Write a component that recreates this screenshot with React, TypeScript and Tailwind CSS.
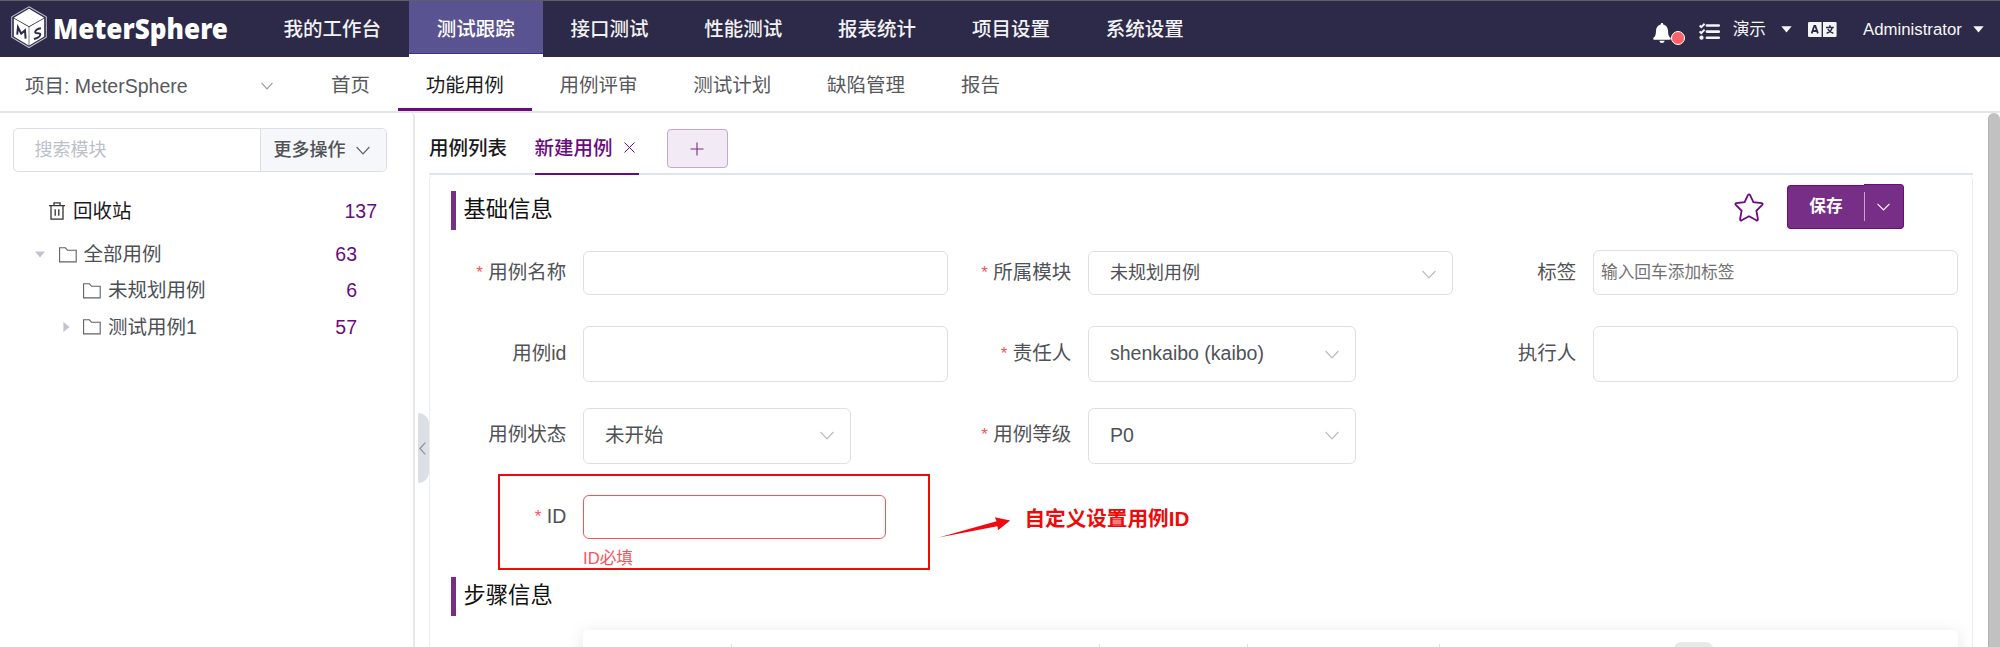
import type { ReactNode } from "react";

const SANS = "font-['Liberation_Sans','Noto_Sans_CJK_SC',sans-serif]";

function Chevron({ className, w = 14, h = 9 }: { className?: string; w?: number; h?: number }) {
  return (
    <svg width={w} height={h} viewBox="0 0 14 9" preserveAspectRatio="none" fill="none" className={className}>
      <path d="M0.6 1 L7 7.8 L13.4 1" stroke="currentColor" strokeWidth="1.2" />
    </svg>
  );
}

function Caret() {
  return (
    <svg width="11" height="7" viewBox="0 0 11 7" className="shrink-0">
      <path d="M0.3 0.3 H10.7 L5.5 6.6 Z" fill="#f4f4f6" />
    </svg>
  );
}

function Logo() {
  return (
    <svg width="252" height="57" viewBox="0 0 252 57" className="shrink-0 overflow-visible">
      <path d="M29 6.8 L46.3 16.8 V37.2 L29 47.5 L11.7 37.2 V16.8 Z" fill="none" stroke="#bdbccb" strokeWidth="1.1" />
      <path d="M29 8.8 L44.2 17.7 L29 26.2 L13.8 17.7 Z" fill="#fff" />
      <path d="M13.8 18.6 L28.7 27 V45.4 L13.8 36.6 Z" fill="#fff" />
      <path d="M44.2 18.6 L29.3 27 V45.4 L44.2 36.6 Z" fill="#fff" />
      <path d="M17.2 34.6 L18 27.2 L21.2 33.6 L25 30.4 L25.6 38.6" fill="none" stroke="#2c2a48" strokeWidth="2" />
      <path d="M40.9 28.2 C37.4 28.6 34.9 30.4 35.2 32.4 C35.5 34.2 40 32.2 40.3 34.2 C40.5 36.4 37.4 38.3 33.9 38.9" fill="none" stroke="#2c2a48" strokeWidth="2" />
      <text
        x="53"
        y="38.5"
        textLength="175"
        lengthAdjust="spacingAndGlyphs"
        className="fill-white font-['Noto_Sans',sans-serif] text-[28.5px] leading-none font-black"
      >
        MeterSphere
      </text>
    </svg>
  );
}

const mainNav = ["我的工作台", "测试跟踪", "接口测试", "性能测试", "报表统计", "项目设置", "系统设置"];
const subNav = ["首页", "功能用例", "用例评审", "测试计划", "缺陷管理", "报告"];

function Header() {
  return (
    <header className="flex h-[57px] shrink-0 border-t border-[#5f5f62] bg-[#2c2a48] text-white">
      <div className="-mt-px w-[255.5px] shrink-0">
        <Logo />
      </div>
      <nav className="flex">
        {mainNav.map((item) =>
          item === "测试跟踪" ? (
            <div key={item} className="h-14 bg-white">
              <div className="flex h-[53px] items-center border-b border-[#3a3191] bg-[#5a5391] px-[27.9px] pt-[5px] text-[19.5px] font-medium">
                {item}
              </div>
            </div>
          ) : (
            <div key={item} className="flex h-[53px] items-center px-[27.9px] pt-[5px] text-[19.5px] font-medium text-[#f2f2f4]">
              {item}
            </div>
          )
        )}
      </nav>
      <div className="ml-auto flex h-[57px] items-center pr-4 text-[16.7px] text-[#f6f6f8]">
        <div className="relative mt-[7px] h-[20px] w-[34px]">
          <svg width="18" height="20" viewBox="0 0 18 20">
            <path
              d="M9 0 C9.9 0 10.3 .7 10.2 1.5 C13.2 2.2 14.9 4.6 15 7.7 C15.1 11.8 15.8 13.4 17.3 14.6 C18.2 15.5 17.8 16.8 16.6 16.8 H1.4 C.2 16.8 -.2 15.5 .7 14.6 C2.2 13.4 2.9 11.8 3 7.7 C3.1 4.6 4.8 2.2 7.8 1.5 C7.7 .7 8.1 0 9 0 Z M6.4 17.8 H11.6 C11.4 19.2 10.4 20 9 20 C7.6 20 6.6 19.2 6.4 17.8 Z"
              fill="#fff"
            />
          </svg>
          <span className="absolute top-[7.5px] left-[18.5px] h-[14px] w-[14px] rounded-full border border-white bg-[#fb6368]" />
        </div>
        <svg width="21" height="17" viewBox="0 0 21 17" className="mt-[3px] ml-[12px]">
          <g fill="none" stroke="#f4f4f6">
            <path d="M7.9 2.5 H19.8 M7.9 8.6 H19.8 M7.9 14.7 H19.8" strokeWidth="2.6" strokeLinecap="round" />
            <path d="M.6 2.5 L2.3 4.1 L5.6 .7 M.6 8.4 L2.3 10 L5.6 6.6" strokeWidth="2" />
          </g>
          <circle cx="2.5" cy="14.7" r="2.1" fill="#f4f4f6" />
        </svg>
        <span className="ml-[13px]">演示</span>
        <span className="ml-[15px]">
          <Caret />
        </span>
        <svg width="29" height="15" viewBox="0 0 29 15" className="ml-[16px]">
          <path d="M1.2 0 H13.6 V15 H1.2 Q0 15 0 13.8 V1.2 Q0 0 1.2 0 Z" fill="#f4f4f6" />
          <path d="M15 0 H27.4 Q28.6 0 28.6 1.2 V13.8 Q28.6 15 27.4 15 H15 Z" fill="#f4f4f6" />
          <path d="M3.7 11.4 L6.3 3.8 H7.3 L9.9 11.4 M4.8 9 H8.8" fill="none" stroke="#2c2a48" strokeWidth="1.8" />
          <path d="M18 5.4 H25.8 M21.9 3.2 V5.4 M24.2 5.6 C23.5 8.2 21.4 10.4 18.6 11.3 M19.8 7 C20.9 9.2 23 10.7 25.3 11.3" fill="none" stroke="#2c2a48" strokeWidth="1.5" />
        </svg>
        <span className="ml-[26px] w-[101px] text-[16.8px] whitespace-nowrap">Administrator</span>
        <span className="ml-[9px]">
          <Caret />
        </span>
      </div>
    </header>
  );
}

function SubHeader() {
  return (
    <div className="flex h-14 shrink-0 border-b-2 border-[#e6e6e6] text-[19.5px] text-[#58595c]">
      <div className="flex w-[303px] items-center pt-[6px] pl-[25px]">
        <span className="w-[236px]">项目: MeterSphere</span>
        <Chevron w={12} h={8} className="-mt-[3px] text-[#94969a]" />
      </div>
      {subNav.map((item) =>
        item === "功能用例" ? (
          <div key={item} className="flex h-[54px] items-center border-b-[3px] border-[#6a0a80] px-[27.9px] pt-[7px] text-[#1a1a1c]">
            {item}
          </div>
        ) : (
          <div key={item} className="flex h-[54px] items-center px-[27.9px] pt-[4px]">
            {item}
          </div>
        )
      )}
    </div>
  );
}

function Folder() {
  return (
    <svg width="18" height="16" viewBox="0 0 18 16" fill="none" className="shrink-0">
      <path d="M.6 14.9 V.8 H6.4 L8.6 3.3 H17.2 V14.9 Z" stroke="#606266" strokeWidth="1.1" />
    </svg>
  );
}

function TreeRow({ label, count, className, arrow }: { label: string; count: number; className: string; arrow?: "down" | "right" }) {
  return (
    <div className={`flex h-[36.3px] items-center pr-[56px] text-[#4c4f55] ${className}`}>
      <span className="flex w-[23.5px] shrink-0 items-center">
        {arrow === "down" && (
          <svg width="10" height="7" viewBox="0 0 10 7">
            <path d="M0 .4 H10 L5 6.6 Z" fill="#c0c4cc" />
          </svg>
        )}
        {arrow === "right" && (
          <svg width="7" height="10" viewBox="0 0 7 10" className="ml-[3px]">
            <path d="M.4 0 V10 L6.6 5 Z" fill="#c0c4cc" />
          </svg>
        )}
      </span>
      <Folder />
      <span className="ml-[7px]">{label}</span>
      <span className="ml-auto text-[#6a0a80]">{count}</span>
    </div>
  );
}

function Sidebar() {
  return (
    <aside className="w-[415px] shrink-0 rounded-tr border-r-2 border-[#e9e9ea] text-[19.5px]">
      <div className="mt-[15px] ml-[12.5px] flex h-11 w-[374px] overflow-hidden rounded-[5px] border border-[#dcdfe6] text-[18px]">
        <div className="flex flex-1 items-center pl-[21px] text-[#bcc0c9]">搜索模块</div>
        <div className="flex w-[126px] items-center border-l border-[#dcdfe6] bg-[#f5f7fa] pl-[13px] font-medium text-[#505256]">
          更多操作
          <Chevron w={14} h={9} className="ml-[10px] text-[#606266]" />
        </div>
      </div>
      <div className="mt-[22px] flex h-9 items-center pr-[36px] pl-[49px] text-[#1b1b1d]">
        <svg width="16" height="18" viewBox="0 0 16 18" fill="none" stroke="#333" strokeWidth="1.3" className="-mt-[2px]">
          <path d="M0 3.6 H16 M2 3.6 V17.2 H14 V3.6 M5 3.4 V.9 H11 V3.4 M6.2 7.2 V13.8 M9.8 7.2 V13.8" />
        </svg>
        <span className="ml-[8px]">回收站</span>
        <span className="ml-auto text-[#6a0a80]">137</span>
      </div>
      <TreeRow className="mt-[6.5px] pl-[35px]" label="全部用例" count={63} arrow="down" />
      <TreeRow className="pl-[59.5px]" label="未规划用例" count={6} />
      <TreeRow className="pl-[59.5px]" label="测试用例1" count={57} arrow="right" />
    </aside>
  );
}

function SectionTitle({ children }: { children: ReactNode }) {
  return (
    <div className="flex h-[39px] items-center border-l-[5.5px] border-[#772e87] pl-[7.5px] text-[22.3px] text-[#111]">{children}</div>
  );
}

function Field({ label, required, children }: { label: string; required?: boolean; children: ReactNode }) {
  return (
    <div className="flex w-[505px] shrink-0">
      <div className="flex w-[140px] shrink-0 items-center justify-end pr-[16.7px] pb-px text-[19.5px] text-[#505257]">
        {required && <span className="mr-[5.5px] text-[17px] text-[#f5545a]">*</span>}
        {label}
      </div>
      {children}
    </div>
  );
}

function Box({ className, children }: { className: string; children?: ReactNode }) {
  return <div className={`flex items-center justify-between rounded-[6px] border pr-[16.5px] ${className}`}>{children}</div>;
}

function Form() {
  return (
    <div className="ml-[13px] w-[1515px] text-[#505257]">
      <div className="mt-[21px] flex h-11">
        <Field label="用例名称" required>
          <Box className="w-[365px] border-[#dcdfe6]" />
        </Field>
        <Field label="所属模块" required>
          <Box className="w-[366px] border-[#dcdfe6] pl-[21px] text-[18px]">
            未规划用例
            <Chevron className="mt-[3px] text-[#b8bcc5]" />
          </Box>
        </Field>
        <Field label="标签">
          <Box className="-mt-px w-[365px] border-[#dcdfe6] pl-[7px] text-[16.7px] text-[#727272]">输入回车添加标签</Box>
        </Field>
      </div>
      <div className="mt-[31px] flex h-14">
        <Field label="用例id">
          <Box className="w-[365px] border-[#dcdfe6]" />
        </Field>
        <Field label="责任人" required>
          <Box className="w-[268px] border-[#dcdfe6] pl-[21px] text-[19.5px]">
            shenkaibo (kaibo)
            <Chevron className="text-[#b8bcc5]" />
          </Box>
        </Field>
        <Field label="执行人">
          <Box className="w-[365px] border-[#dcdfe6]" />
        </Field>
      </div>
      <div className="mt-[25.5px] flex h-14">
        <Field label="用例状态">
          <Box className="w-[268px] border-[#dcdfe6] pl-[21px] text-[19.5px]">
            未开始
            <Chevron className="text-[#b8bcc5]" />
          </Box>
        </Field>
        <Field label="用例等级" required>
          <Box className="w-[268px] border-[#dcdfe6] pl-[21px] text-[19.5px]">
            P0
            <Chevron className="text-[#b8bcc5]" />
          </Box>
        </Field>
      </div>
      <div className="mt-[31.5px] flex h-11">
        <Field label="ID" required>
          <Box className="w-[303px] border-[#f5545c]" />
        </Field>
      </div>
      <div className="ml-[140px] flex h-[37.5px] items-center pt-[2px] text-[16.7px] text-[#f5545c]">ID必填</div>
    </div>
  );
}

function StepTable() {
  return (
    <div className="mt-[-8px] h-[39px] overflow-hidden pt-[22px] pl-[129px]">
      <div className="flex h-[60px] w-[1375px] rounded-[5px] bg-white pt-[14px] shadow-[0_2px_17px_rgba(0,0,0,0.1)]">
        <span className="ml-[148px] w-px bg-[#dcdfe6]" />
        <span className="ml-[367px] w-px bg-[#dcdfe6]" />
        <span className="ml-[147px] w-px bg-[#dcdfe6]" />
        <span className="ml-[191px] w-px bg-[#dcdfe6]" />
        <span className="-mt-[2px] ml-[234px] h-[30px] w-[39px] rounded-[7px] bg-[#e9e9e9]" />
      </div>
    </div>
  );
}

function Annotation() {
  return (
    <>
      <div className="absolute top-[474px] left-[498px] h-[95.5px] w-[432px] border-2 border-[#ee0a0a]" />
      <svg width="74" height="26" viewBox="0 0 74 26" className="absolute top-[514px] left-[938px]">
        <path d="M.6 23.5 L58.6 7.2 L56.8 3.3 L72.2 6.4 L60 16.3 L59.4 12.2 Z" fill="#ee0a0f" />
      </svg>
      <div className="absolute top-[503.5px] left-[1024.5px] text-[20.6px] leading-[30px] font-bold whitespace-nowrap text-[#ee0a0a]">
        自定义设置用例ID
      </div>
    </>
  );
}

function Main() {
  return (
    <main className="flex min-w-0 flex-1">
      <div className="flex w-[14px] items-start">
        <div className="mt-[300px] ml-[2.5px] flex h-[70px] w-[11px] items-center rounded-r-[11px] bg-[#dcdfe3] pl-px">
          <svg width="7" height="13" viewBox="0 0 7 13" fill="none">
            <path d="M6.3 .6 L.9 6.5 L6.3 12.4" stroke="#8e9196" strokeWidth="1.2" />
          </svg>
        </div>
      </div>
      <div className="w-[1544px]">
        <div className="flex h-[62px] border-b-2 border-[#e0e4ed] text-[19.5px]">
          <div className="flex h-[62px] items-center pt-[9px] font-medium text-[#1a1a1c]">用例列表</div>
          <div className="ml-[27.5px] flex h-[62px] w-[104px] shrink-0 items-center border-b-[2.5px] border-[#6a0a80] pt-[11px] font-medium text-[#6a0a80]">
            <span className="shrink-0">新建用例</span>
            <svg width="11" height="11" viewBox="0 0 11 11" className="-mt-[3px] ml-[11px]">
              <path d="M.5 .5 L10.5 10.5 M10.5 .5 L.5 10.5" stroke="#6a0a80" strokeWidth="1" />
            </svg>
          </div>
          <div className="mt-[16px] ml-[28px] flex h-[39px] w-[61px] items-center justify-center rounded-[4px] border border-[#c5a7cd] bg-[#f2eaf4]">
            <svg width="14" height="14" viewBox="0 0 14 14">
              <path d="M7 .5 V13.5 M.5 7 H13.5" stroke="#772e87" strokeWidth="1.1" />
            </svg>
          </div>
        </div>
        <div className="h-[472px] rounded-t-[5px] border-x border-[#e9edf5]">
          <div className="flex h-[55px] items-start pl-[21px]">
            <div className="pt-[15.5px]">
              <SectionTitle>基础信息</SectionTitle>
            </div>
            <svg width="30" height="29" viewBox="0 0 30 29" className="mt-[18px] ml-auto" fill="none">
              <path
                d="M15 1.3 Q15.7 1.3 16.1 2.1 L19.4 9.1 L27.7 10.2 Q29.3 10.6 28.2 11.9 L22.4 17.8 L23.9 26.1 Q24 28 22.3 27.3 L15 23.3 L7.7 27.3 Q6 28 6.1 26.1 L7.6 17.8 L1.8 11.9 Q.7 10.6 2.3 10.2 L10.6 9.1 L13.9 2.1 Q14.3 1.3 15 1.3 Z"
                stroke="#6a0a80"
                strokeWidth="1.8"
              />
            </svg>
            <div className="mt-[9px] mr-[68px] ml-[23px] flex items-center text-white">
              <div className="flex h-[44px] w-[77px] items-center justify-center rounded-l-[4px] border-y border-l border-[#690b7b] bg-[#772e87] text-[16.7px] font-bold">
                保存
              </div>
              <div className="flex h-[45px] w-[40px] items-center rounded-r-[4px] border-y border-r border-[#690b7b] bg-[#772e87]">
                <span className="h-[29px] w-px bg-[#c6a4cd]" />
                <Chevron w={13} h={8} className="ml-[12px]" />
              </div>
            </div>
          </div>
          <Form />
          <div className="pl-[21px]">
            <SectionTitle>步骤信息</SectionTitle>
          </div>
          <div className="pl-[24px]">
            <StepTable />
          </div>
        </div>
      </div>
      <div className="ml-auto w-[12px] rounded-t-full border-l border-[#b5b5b5] bg-[#c1c1c1]" />
    </main>
  );
}

export default function App() {
  return (
    <div className={`relative flex h-[647px] w-[2000px] flex-col overflow-hidden bg-white leading-normal ${SANS}`}>
      <Header />
      <SubHeader />
      <div className="flex min-h-0 flex-1">
        <Sidebar />
        <Main />
      </div>
      <Annotation />
    </div>
  );
}
